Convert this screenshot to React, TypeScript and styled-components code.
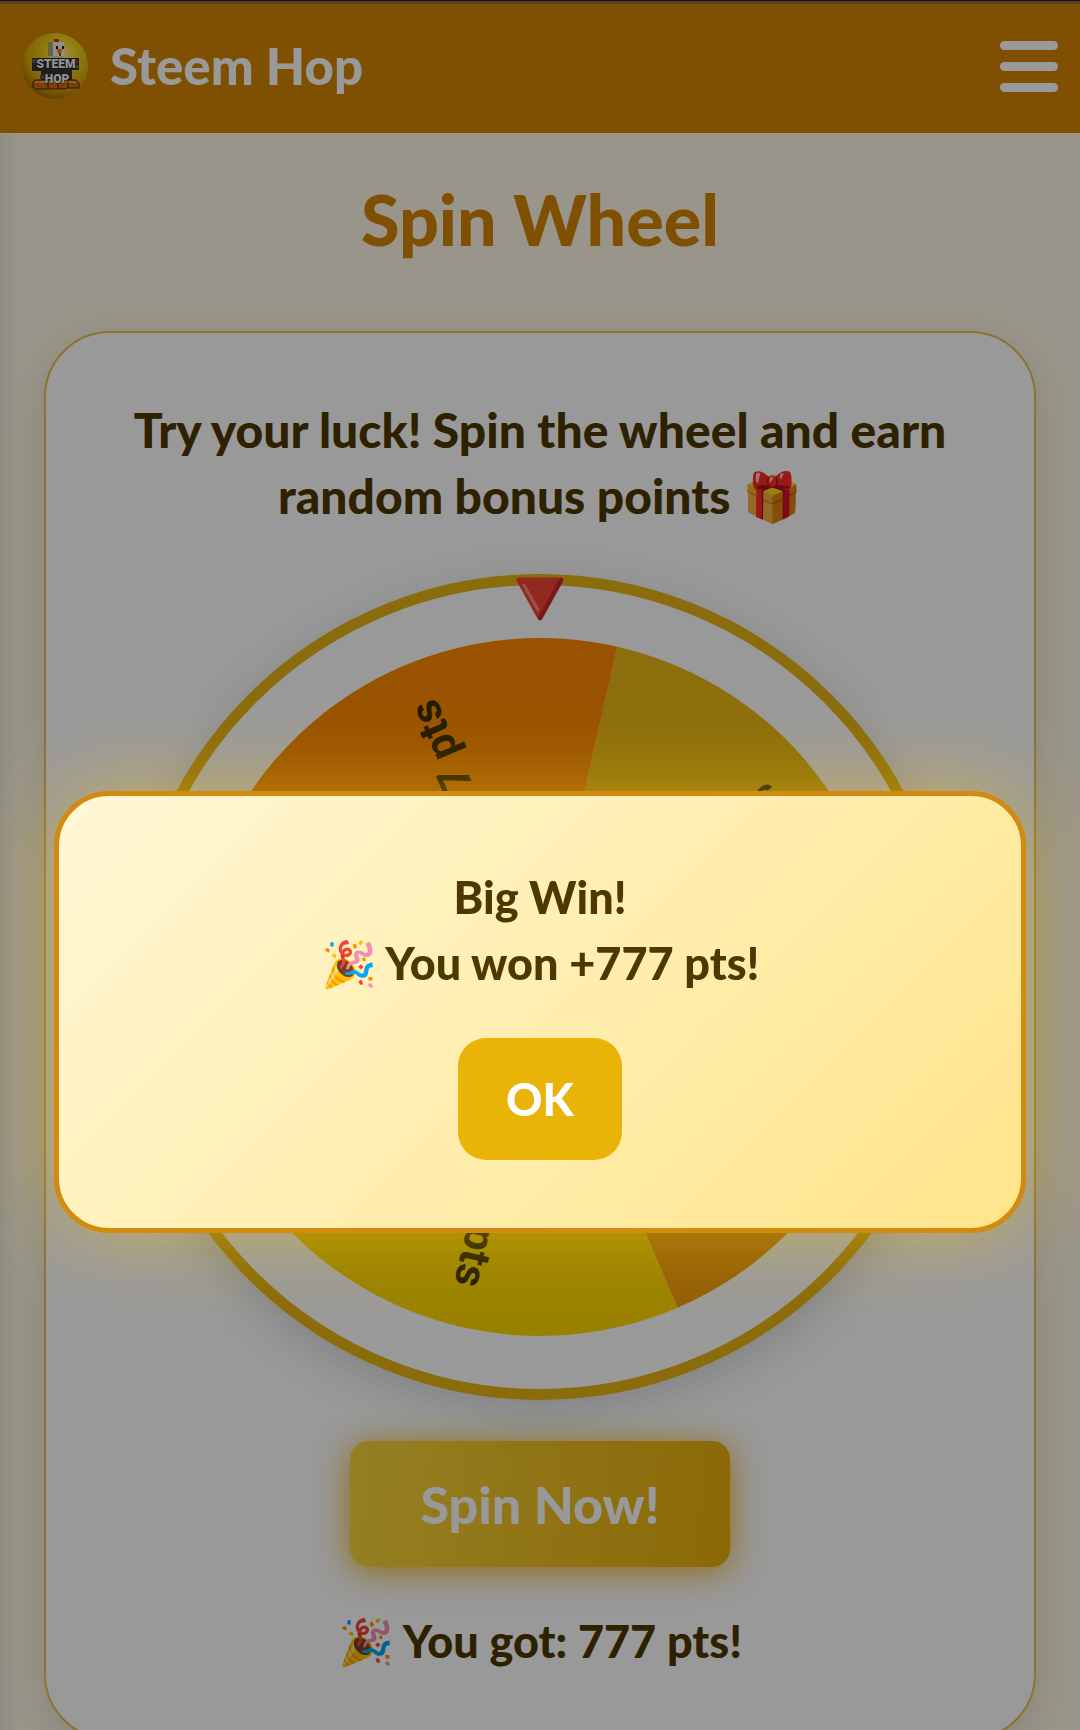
import React, { useState } from "react";
import styled, { createGlobalStyle } from "styled-components";

const GlobalStyle = createGlobalStyle`
    *, *::before, *::after {
        box-sizing: border-box;
    }

    body {
        margin: 0;
        overflow: hidden;
        background: #fff9e6;
        color: #4d3800;
        font-family: Lato, "Liberation Sans", sans-serif;
        font-size: 45px;
        font-weight: 900;
        line-height: 66px;
    }
`;

const Header = styled.header`
    display: flex;
    align-items: center;
    justify-content: space-between;
    padding: 33px 22px 34px;
    background: #d48604;
    box-shadow: inset 0 1px #2e1e1a, inset 0 4px #946f4d;
    color: #ffffff;
`;

const Brand = styled.a`
    display: flex;
    align-items: center;
    gap: 22px;
    color: inherit;
    font-size: 51px;
    text-decoration: none;
`;

const LogoArt = styled.svg`
    display: block;
    width: 66px;
    height: 66px;
`;

const MenuButton = styled.button`
    display: grid;
    gap: 12px;
    width: 58px;
    padding: 0;
    border: 0;
    background: none;
`;

const MenuBar = styled.span`
    height: 9px;
    border-radius: 5px;
    background: #ffffff;
`;

const Page = styled.main`
    padding: 36px 44px;
    background: linear-gradient(90deg, rgba(0, 0, 0, 0.06), rgba(0, 0, 0, 0) 20px);
`;

const Title = styled.h1`
    margin: 0 0 62px;
    color: #d48604;
    font-size: 70px;
    font-weight: 900;
    line-height: 100px;
    text-align: center;
`;

const Card = styled.section`
    display: flex;
    flex-direction: column;
    align-items: center;
    gap: 41px;
    padding: 64px 66px;
    border: 2px solid #e8c050;
    border-radius: 66px;
    background: #ffffff;
    box-shadow: 0 11px 40px rgba(0, 0, 0, 0.12);
    text-align: center;
`;

const Text = styled.p`
    margin: 0;
`;

const Intro = styled(Text)`
    margin-bottom: 4px;
    font-size: 48px;
`;

const WheelFrame = styled.div`
    position: relative;
    width: 826px;
    max-width: 100%;
    aspect-ratio: 1;
    border: 11px solid #e8b414;
    border-radius: 50%;
    box-shadow: 0 12px 44px rgba(0, 0, 0, 0.15);
`;

const WheelArt = styled.svg`
    display: block;
    width: 100%;
    height: 100%;
`;

const Pointer = styled.svg`
    position: absolute;
    top: -8px;
    left: 50%;
    width: 48px;
    height: 44px;
    margin-left: -24px;
`;

const SpinButton = styled.button`
    padding: 30px 70px;
    border: 0;
    border-radius: 18px;
    background: linear-gradient(95deg, #f8d53c, #e8ae0c);
    box-shadow: 0 4px 34px rgba(234, 170, 8, 0.9);
    color: #ffffff;
    font: inherit;
    font-size: 52px;
`;

const Overlay = styled.div`
    position: fixed;
    inset: 0;
    display: flex;
    align-items: center;
    justify-content: center;
    padding-top: 294px;
    background: rgba(0, 0, 0, 0.4);
`;

const Dialog = styled.div`
    display: flex;
    flex-direction: column;
    align-items: center;
    gap: 42px;
    width: 90%;
    padding: 68px;
    border: 5px solid #d18b10;
    border-radius: 55px;
    background: linear-gradient(135deg, #fff8d6, #ffe48a);
    box-shadow: 0 0 80px rgba(255, 205, 20, 0.45);
    text-align: center;
`;

const OkButton = styled.button`
    padding: 28px 48px;
    border: 0;
    border-radius: 28px;
    background: #eab308;
    color: #ffffff;
    font: inherit;
`;

type Slice = {
    label : string;
    color : string;
}

const SLICE_ANGLE = 72;
const WHEEL_ROTATION = 12.8;
const RADIUS = 349;

const slices : Array<Slice> = [
    { label: "50 pts", color: "#eab814" },
    { label: "100 pts", color: "#f59e0b" },
    { label: "200 pts", color: "#ffd700" },
    { label: "500 pts", color: "#facc15" },
    { label: "777 pts", color: "#ff8a00" },
];

const point = ( degrees : number ) => {
    const rad = degrees * Math.PI / 180;
    return `${ RADIUS * Math.sin(rad) } ${ -RADIUS * Math.cos(rad) }`;
}

const Wheel = () =>
    <WheelArt viewBox="-402 -402 804 804" role="img" aria-label="Prize wheel">
        { slices.map(
            ( slice, index ) => {
                const start = WHEEL_ROTATION + index * SLICE_ANGLE;
                return (
                    <g key={slice.label}>
                        <path
                            d={`M0 0 L${ point(start) } A${ RADIUS } ${ RADIUS } 0 0 1 ${ point(start + SLICE_ANGLE) } Z`}
                            fill={slice.color}
                        />
                        <text
                            transform={`rotate(${ start + SLICE_ANGLE / 2 - 90 })`}
                            x="308"
                            y="18"
                            textAnchor="end"
                            fill="#3a2c00"
                            fontFamily="Roboto, sans-serif"
                            fontSize="43"
                            fontWeight="700"
                        >
                            {slice.label}
                        </text>
                    </g>
                )
            })
        }
    </WheelArt>

const Logo = () =>
    <LogoArt viewBox="0 0 66 66" aria-hidden="true">
        <defs>
            <radialGradient id="ball" cx="0.6" cy="0.3" r="0.7">
                <stop offset="0" stopColor="#fff08a" />
                <stop offset="0.35" stopColor="#efd018" />
                <stop offset="0.75" stopColor="#d8a80c" />
                <stop offset="1" stopColor="#a87206" />
            </radialGradient>
        </defs>
        <circle cx="33" cy="33" r="33" fill="url(#ball)" />
        <path d="M29 22h12v6H29z" fill="#d9cfae" />
        <path d="M32 6h5v4h-5z" fill="#d8301c" />
        <path d="M26 9h16v14H26z" fill="#f4efdc" />
        <path d="M26 9h5v14h-5z" fill="#a8a878" />
        <path d="M34 13h2v3h-2zM40 13h2v3h-2z" fill="#221a10" />
        <path d="M35 16h5v3h-1v2h-3v-2h-1z" fill="#f0861c" />
        <path d="M37 20h2v3h-2z" fill="#d8301c" />
        <path d="M10 25h47v12h-7v12H19V38h-9z" fill="#34332c" />
        <path d="M10 26h5v4h-5zM18 42h4v4h-4z" fill="#5d5b4e" />
        <path d="M54 27h2v3h-2z" fill="#d8301c" />
        <path d="M54 32h2v3h-2z" fill="#4f9a3a" />
        <path d="M13 47h41l3 3v5H45l-3 1H14l-3-2v-5z" fill="#d06c14" stroke="#4a2208" strokeWidth="1" />
        <path d="M14 48h39l2 2H12z" fill="#f0a030" />
        <path d="M26 48v8M36 48v8M46 48v7" stroke="#4a2208" strokeWidth="1" />
        <g
            fill="#f2f2f2"
            stroke="#1c1c1c"
            strokeWidth="1"
            paintOrder="stroke"
            fontFamily="Roboto, sans-serif"
            fontSize="12"
            fontWeight="900"
            textAnchor="middle"
        >
            <text x="34" y="35">STEEM</text>
            <text x="35" y="50">HOP</text>
        </g>
    </LogoArt>

type PrizeDialogProps = {
    points : number;
    onClose : () => void;
}

const PrizeDialog = ({ points, onClose } : PrizeDialogProps) =>
    <Overlay>
        <Dialog role="dialog" aria-modal="true">
            <Text>
                Big Win!<br />
                🎉 You won +{points} pts!
            </Text>
            <OkButton type="button" onClick={onClose}>OK</OkButton>
        </Dialog>
    </Overlay>

const App = () => {
    const [open, setOpen] = useState(true);
    const points = 777;

    return (
        <>
            <GlobalStyle />
            <Header>
                <Brand href="#">
                    <Logo />
                    Steem Hop
                </Brand>
                <MenuButton type="button" aria-label="Menu">
                    <MenuBar />
                    <MenuBar />
                    <MenuBar />
                </MenuButton>
            </Header>
            <Page>
                <Title>Spin Wheel</Title>
                <Card>
                    <Intro>Try your luck! Spin the wheel and earn random bonus points 🎁</Intro>
                    <WheelFrame>
                        <Wheel />
                        <Pointer viewBox="0 0 48 44" aria-hidden="true">
                            <path d="M3 3H45L24 41Z" fill="#f44336" stroke="#f44336" strokeWidth="5" strokeLinejoin="round" />
                            <path d="M45 3L24 41" stroke="#c62828" strokeWidth="4" strokeLinecap="round" />
                            <path d="M8 8L22 33" stroke="#ff8a80" strokeWidth="3" strokeLinecap="round" />
                        </Pointer>
                    </WheelFrame>
                    <SpinButton type="button" onClick={() => setOpen(true)}>Spin Now!</SpinButton>
                    <Text>🎉 You got: {points} pts!</Text>
                </Card>
            </Page>
            { open && <PrizeDialog points={points} onClose={() => setOpen(false)} /> }
        </>
    )
}

export default App;
